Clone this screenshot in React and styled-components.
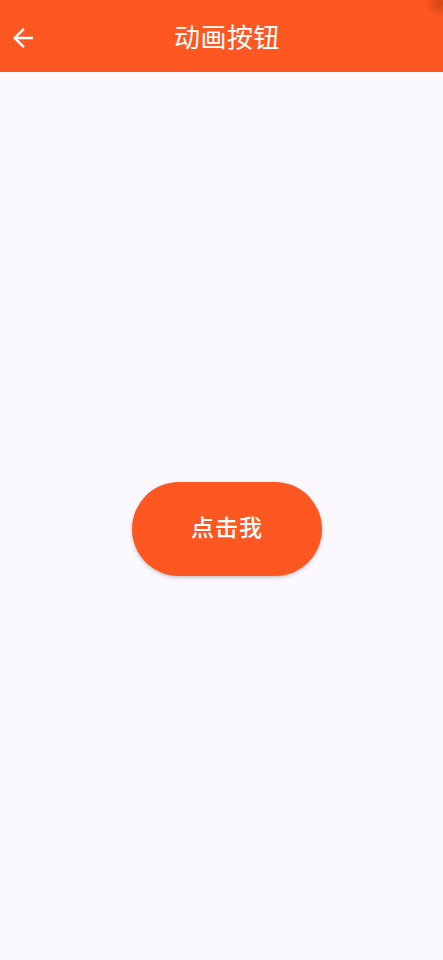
import React from 'react'
import styled, { createGlobalStyle } from 'styled-components'

const GlobalStyle = createGlobalStyle`
  html, body {
    margin: 0;
    padding: 0;
    background: #fcf8ff;
    font-family: Roboto, "Noto Sans CJK SC", sans-serif;
    overflow: hidden;
  }
`

const App = () => {
  const [pressed, setPressed] = React.useState(false)

  return (
    <>
      <GlobalStyle />
      <Page>
        <AppBar>
          <BackButton aria-label="back">
            <svg width="30" height="30" viewBox="0 0 24 24" fill="#fff">
              <path d="M20 11H7.83l5.59-5.59L12 4l-8 8 8 8 1.41-1.41L7.83 13H20v-2z" />
            </svg>
          </BackButton>
          <Title>动画按钮</Title>
          <CornerShade />
        </AppBar>
        <Body>
          <PillButton $pressed={pressed} onClick={() => setPressed(!pressed)}>
            点击我
          </PillButton>
        </Body>
      </Page>
    </>
  )
}

const Page = styled.div`
  display: flex;
  flex-direction: column;
  width: 443px;
  height: 960px;
  background: #fcf8ff;
`

const AppBar = styled.header`
  position: relative;
  display: flex;
  align-items: center;
  justify-content: center;
  height: 72px;
  padding-left: 11px;
  flex-shrink: 0;
  background: #ff5722;
  overflow: hidden;
`

const BackButton = styled.button`
  position: absolute;
  left: 8px;
  top: 23px;
  display: flex;
  padding: 0;
  border: none;
  background: none;
  cursor: pointer;
`

const Title = styled.h1`
  margin: 0;
  padding-bottom: 2px;
  color: #fff;
  font-size: 26px;
  font-weight: 400;
  font-family: Roboto, "Noto Sans CJK SC", sans-serif;
  letter-spacing: 0.5px;
`

const CornerShade = styled.div`
  position: absolute;
  right: -12px;
  top: -12px;
  width: 30px;
  height: 30px;
  border-radius: 50%;
  background: radial-gradient(circle, rgba(110, 30, 0, 0.3) 0%, rgba(110, 30, 0, 0) 70%);
  pointer-events: none;
`

const Body = styled.main`
  flex: 1;
  display: flex;
  justify-content: center;
  padding-top: 410px;
  padding-left: 11px;
`

const PillButton = styled.button`
  width: 190px;
  height: 94px;
  padding: 0 0 6px;
  border: none;
  border-radius: 47px;
  background: #ff5722;
  color: #fff;
  font-size: 23px;
  font-weight: 500;
  font-family: Roboto, "Noto Sans CJK SC", sans-serif;
  letter-spacing: 1px;
  box-shadow: 0 2px 4px rgba(0, 0, 0, 0.16), 0 1px 2px rgba(0, 0, 0, 0.08);
  cursor: pointer;
  transform: scale(${(p) => (p.$pressed ? 0.96 : 1)});
  transition: transform 0.2s ease;
`

export default App
